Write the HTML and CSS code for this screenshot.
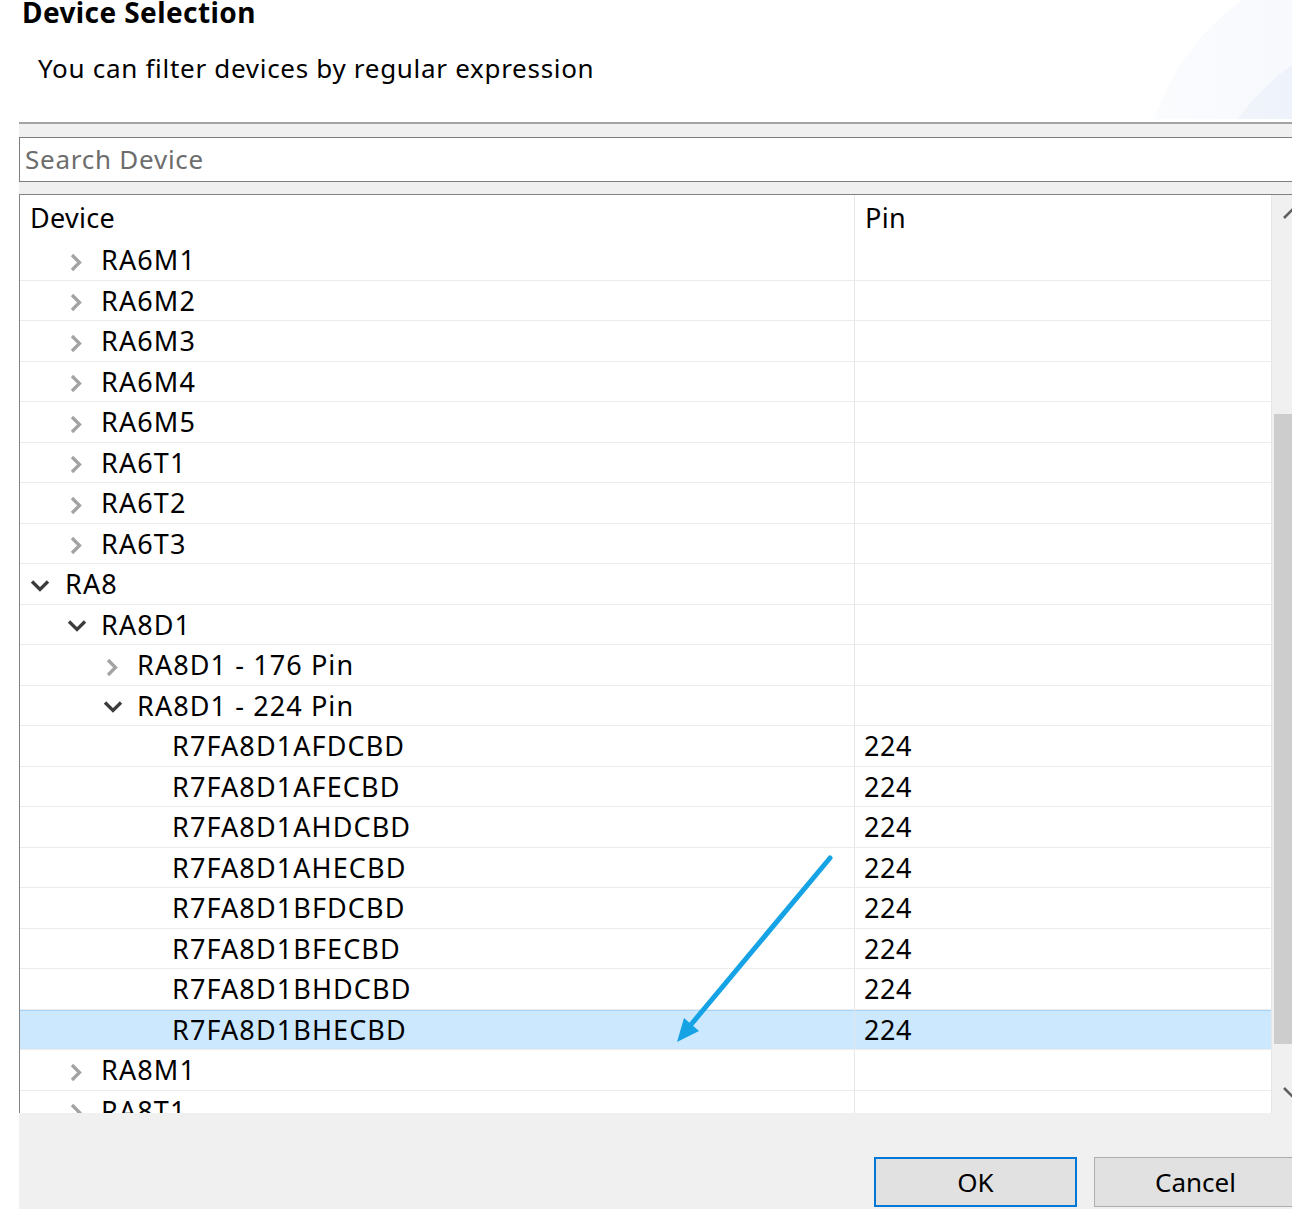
FILE: index.html
```html
<!DOCTYPE html>
<html lang="en">
<head>
<meta charset="utf-8">
<title>Device Selection</title>
<link rel="stylesheet" href="styles.css">
</head>
<body>
<div class="top">
  <svg class="banner" width="160" height="119" viewBox="0 0 160 119" aria-hidden="true">
    <defs>
      <linearGradient id="g1" x1="0" y1="0" x2="1" y2="0">
        <stop offset="0" stop-color="#fbfcfe"/>
        <stop offset="1" stop-color="#eef2fb"/>
      </linearGradient>
      <linearGradient id="g2" x1="0" y1="0" x2="1" y2="0">
        <stop offset="0" stop-color="#f2f5fb"/>
        <stop offset="1" stop-color="#dfe7f7"/>
      </linearGradient>
    </defs>
    <circle cx="250" cy="195" r="240" fill="url(#g1)"/>
    <circle cx="300" cy="260" r="240" fill="url(#g2)"/>
  </svg>
  <h1 class="title">Device Selection</h1>
  <p class="subtitle">You can filter devices by regular expression</p>
</div>

<div class="main">
  <div class="search">Search Device</div>

  <div class="table">
    <div class="tree">
      <div class="head">
        <div class="c1">Device</div>
        <div class="c2">Pin</div>
      </div>

      <div class="row"><div class="c1 l1"><svg class="chev" viewBox="0 0 24 24"><path class="closed" d="M8 7 L15.5 14.5 L8 22"/></svg>RA6M1</div><div class="c2"></div></div>
      <div class="row"><div class="c1 l1"><svg class="chev" viewBox="0 0 24 24"><path class="closed" d="M8 7 L15.5 14.5 L8 22"/></svg>RA6M2</div><div class="c2"></div></div>
      <div class="row"><div class="c1 l1"><svg class="chev" viewBox="0 0 24 24"><path class="closed" d="M8 7 L15.5 14.5 L8 22"/></svg>RA6M3</div><div class="c2"></div></div>
      <div class="row"><div class="c1 l1"><svg class="chev" viewBox="0 0 24 24"><path class="closed" d="M8 7 L15.5 14.5 L8 22"/></svg>RA6M4</div><div class="c2"></div></div>
      <div class="row"><div class="c1 l1"><svg class="chev" viewBox="0 0 24 24"><path class="closed" d="M8 7 L15.5 14.5 L8 22"/></svg>RA6M5</div><div class="c2"></div></div>
      <div class="row"><div class="c1 l1"><svg class="chev" viewBox="0 0 24 24"><path class="closed" d="M8 7 L15.5 14.5 L8 22"/></svg>RA6T1</div><div class="c2"></div></div>
      <div class="row"><div class="c1 l1"><svg class="chev" viewBox="0 0 24 24"><path class="closed" d="M8 7 L15.5 14.5 L8 22"/></svg>RA6T2</div><div class="c2"></div></div>
      <div class="row"><div class="c1 l1"><svg class="chev" viewBox="0 0 24 24"><path class="closed" d="M8 7 L15.5 14.5 L8 22"/></svg>RA6T3</div><div class="c2"></div></div>
      <div class="row"><div class="c1 l0"><svg class="chev" viewBox="0 0 24 24"><path class="open" d="M4 9.5 L12 17.5 L20 9.5"/></svg>RA8</div><div class="c2"></div></div>
      <div class="row"><div class="c1 l1"><svg class="chev" viewBox="0 0 24 24"><path class="open" d="M5 9.5 L13 17.5 L21 9.5"/></svg>RA8D1</div><div class="c2"></div></div>
      <div class="row"><div class="c1 l2"><svg class="chev" viewBox="0 0 24 24"><path class="closed" d="M8 7 L15.5 14.5 L8 22"/></svg>RA8D1 - 176 Pin</div><div class="c2"></div></div>
      <div class="row"><div class="c1 l2"><svg class="chev" viewBox="0 0 24 24"><path class="open" d="M5 9.5 L13 17.5 L21 9.5"/></svg>RA8D1 - 224 Pin</div><div class="c2"></div></div>
      <div class="row"><div class="c1 l3">R7FA8D1AFDCBD</div><div class="c2">224</div></div>
      <div class="row"><div class="c1 l3">R7FA8D1AFECBD</div><div class="c2">224</div></div>
      <div class="row"><div class="c1 l3">R7FA8D1AHDCBD</div><div class="c2">224</div></div>
      <div class="row"><div class="c1 l3">R7FA8D1AHECBD</div><div class="c2">224</div></div>
      <div class="row"><div class="c1 l3">R7FA8D1BFDCBD</div><div class="c2">224</div></div>
      <div class="row"><div class="c1 l3">R7FA8D1BFECBD</div><div class="c2">224</div></div>
      <div class="row"><div class="c1 l3">R7FA8D1BHDCBD</div><div class="c2">224</div></div>
      <div class="row selected"><div class="c1 l3">R7FA8D1BHECBD</div><div class="c2">224</div></div>
      <div class="row"><div class="c1 l1"><svg class="chev" viewBox="0 0 24 24"><path class="closed" d="M8 7 L15.5 14.5 L8 22"/></svg>RA8M1</div><div class="c2"></div></div>
      <div class="row"><div class="c1 l1"><svg class="chev" viewBox="0 0 24 24"><path class="closed" d="M8 7 L15.5 14.5 L8 22"/></svg>RA8T1</div><div class="c2"></div></div>
    </div>
    <div class="scrollbar">
      <div class="sb-btn"><svg viewBox="0 0 40 40"><path d="M12 23 L20 15 L28 23"/></svg></div>
      <div class="sb-track"><div class="sb-thumb"></div></div>
      <div class="sb-btn"><svg viewBox="0 0 40 40"><path d="M12 15 L20 23 L28 15"/></svg></div>
    </div>
  </div>

  <div class="footer">
    <button class="btn default">OK</button>
    <button class="btn">Cancel</button>
  </div>
</div>

<svg class="annotation" width="1292" height="1209" viewBox="0 0 1292 1209" aria-hidden="true">
  <line x1="830" y1="858" x2="689" y2="1027" stroke="#16a3e6" stroke-width="5" stroke-linecap="round"/>
  <polygon points="677,1042 684,1018 699,1031" fill="#16a3e6"/>
</svg>
</body>
</html>
```

FILE: styles.css
```css
html, body {
  margin: 0;
  padding: 0;
}

body {
  width: 1292px;
  height: 1209px;
  overflow: hidden;
  position: relative;
  background: #ffffff;
  color: #000000;
  font-family: "Noto Sans", "Open Sans", sans-serif;
}

.top {
  position: relative;
  height: 122px;
  display: flex;
  flex-direction: column;
}

.banner {
  position: absolute;
  right: 0;
  top: 0;
}

.title {
  position: relative;
  margin: 0;
  padding-left: 22px;
  font-size: 28px;
  line-height: 24px;
  letter-spacing: 0.4px;
  font-weight: 700;
}

.subtitle {
  position: relative;
  margin: 29px 0 0 0;
  padding-left: 38px;
  font-size: 26px;
  line-height: 30px;
  letter-spacing: 0.7px;
}

.main {
  margin-left: 19px;
  width: 1293px;
  height: 1087px;
  background: #f0f0f0;
  border-top: 2px solid #a3a3a3;
  padding-top: 13px;
  box-sizing: border-box;
  display: flex;
  flex-direction: column;
}

.search {
  height: 45px;
  box-sizing: border-box;
  border: 1px solid #7d7d7d;
  background: #ffffff;
  color: #6d6d6d;
  font-size: 26px;
  line-height: 43px;
  letter-spacing: 0.75px;
  padding-left: 5px;
}

.table {
  margin-top: 12px;
  height: 919px;
  flex: none;
  box-sizing: border-box;
  border-top: 1px solid #828282;
  border-left: 1px solid #828282;
  background: #ffffff;
  display: flex;
  overflow: hidden;
}

.tree {
  width: 1252px;
  border-right: 1px solid #e6e6e6;
  box-sizing: border-box;
  overflow: hidden;
  font-size: 27px;
  letter-spacing: 1.1px;
}

.head, .row {
  display: flex;
}

.head {
  height: 45px;
  line-height: 45px;
  letter-spacing: 0.3px;
}

.row {
  height: 40.5px;
  box-sizing: border-box;
  border-bottom: 1px solid #ebebeb;
  line-height: 39.5px;
}

.row.selected {
  background: #cce8ff;
  box-shadow: inset 0 1px 0 #a6d5fb;
}

.c1 {
  width: 835px;
  box-sizing: border-box;
  border-right: 1px solid #e6e6e6;
  display: flex;
  align-items: center;
  white-space: nowrap;
}

.c2 {
  flex: 1;
  padding-left: 9px;
  white-space: nowrap;
  letter-spacing: 0.6px;
}

.head .c1 { padding-left: 10px; }
.head .c2 { padding-left: 10px; letter-spacing: 0.3px; }

.l0 { padding-left: 8px; }
.l1 { padding-left: 44px; }
.l2 { padding-left: 80px; }
.l3 { padding-left: 152px; }

.chev {
  width: 24px;
  height: 24px;
  margin-right: 13px;
  flex: none;
}

.chev path {
  fill: none;
  stroke-width: 3.3;
  stroke-linejoin: miter;
}

.chev .closed { stroke: #a3a3a3; }
.chev .open { stroke: #3c3c3c; }

.scrollbar {
  width: 40px;
  flex: none;
  background: #f0f0f0;
  display: flex;
  flex-direction: column;
}

.sb-btn {
  height: 40px;
  flex: none;
}

.sb-btn svg {
  width: 40px;
  height: 40px;
  display: block;
}

.sb-btn path {
  fill: none;
  stroke: #606060;
  stroke-width: 2.6;
}

.sb-track {
  flex: 1;
  padding: 179px 2px 0 2px;
}

.sb-thumb {
  height: 630px;
  background: #cdcdcd;
}

.footer {
  flex: 1;
  display: flex;
  justify-content: flex-end;
  align-items: flex-start;
  gap: 17px;
  padding: 44px 15px 0 0;
}

.btn {
  width: 203px;
  height: 50px;
  box-sizing: border-box;
  background: #e1e1e1;
  border: 1px solid #adadad;
  font-family: "Noto Sans", "Open Sans", sans-serif;
  font-size: 26px;
  color: #000000;
  padding: 0;
  line-height: 46px;
}

.btn.default {
  border: 2px solid #0078d7;
}

.annotation {
  position: absolute;
  left: 0;
  top: 0;
  pointer-events: none;
}
```
